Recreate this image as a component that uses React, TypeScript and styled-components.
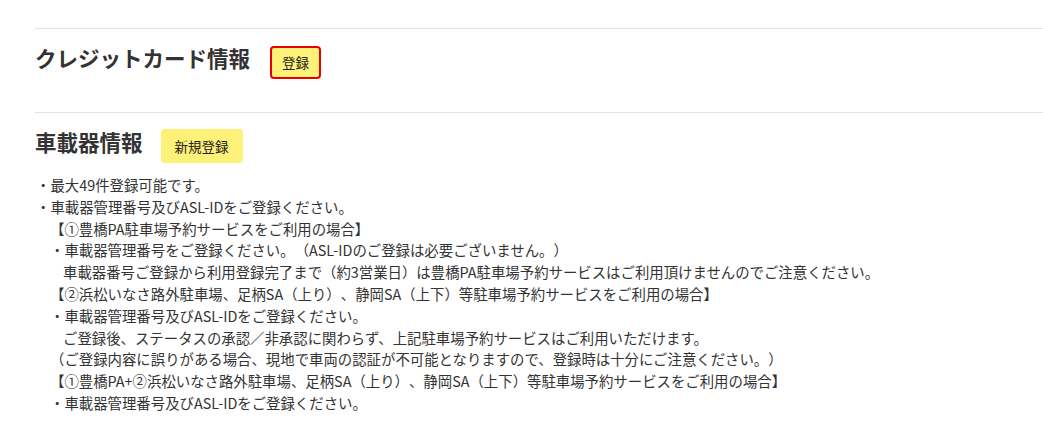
import styled, { createGlobalStyle } from 'styled-components'

const GlobalStyle = createGlobalStyle`
  body {
    margin: 0;
    background: #fff;
    font-family: 'Noto Sans CJK JP', 'Noto Sans', sans-serif;
    color: #333;
    text-spacing-trim: space-all;
  }
`

const Page = styled.div`
  padding: 28px 0 0 35px;
`

const Section = styled.section`
  border-top: 1px solid #e3e3e3;
  padding-top: 16px;
`

const HeadRow = styled.div<{ gap?: number }>`
  display: flex;
  align-items: center;
  height: 34px;
  margin-bottom: ${(p) => p.gap ?? 0}px;
`

const Title = styled.h2`
  margin: 0 0 9px;
  font-size: 21.5px;
  font-weight: 700;
  color: #333;
  line-height: 1;
`

const Button = styled.button<{ focused?: boolean }>`
  margin-left: ${(p) => (p.focused ? '20px' : '18px')};
  height: ${(p) => (p.focused ? '33px' : '34px')};
  padding: 0 ${(p) => (p.focused ? '10px' : '12px')};
  background: #fef177;
  border: ${(p) => (p.focused ? '2px solid #e60000' : '2px solid #fef177')};
  border-radius: 4px;
  font-family: inherit;
  font-size: 13.5px;
  color: #222;
  cursor: pointer;
`

const Notes = styled.div`
  margin-top: 11px;
  font-size: 14.4px;
  line-height: 21.8px;
  color: #333;
  padding-left: 1px;
`

const Line = styled.div<{ indent?: number }>`
  padding-left: ${(p) => p.indent || 0}px;
  white-space: nowrap;
`

const notes: [number, string][] = [
  [0, '・最大49件登録可能です。'],
  [0, '・車載器管理番号及びASL-IDをご登録ください。'],
  [14, '【①豊橋PA駐車場予約サービスをご利用の場合】'],
  [14, '・車載器管理番号をご登録ください。（ASL-IDのご登録は必要ございません。）'],
  [27, '車載器番号ご登録から利用登録完了まで（約3営業日）は豊橋PA駐車場予約サービスはご利用頂けませんのでご注意ください。'],
  [14, '【②浜松いなさ路外駐車場、足柄SA（上り）、静岡SA（上下）等駐車場予約サービスをご利用の場合】'],
  [14, '・車載器管理番号及びASL-IDをご登録ください。'],
  [27, 'ご登録後、ステータスの承認／非承認に関わらず、上記駐車場予約サービスはご利用いただけます。'],
  [14, '（ご登録内容に誤りがある場合、現地で車両の認証が不可能となりますので、登録時は十分にご注意ください。）'],
  [14, '【①豊橋PA+②浜松いなさ路外駐車場、足柄SA（上り）、静岡SA（上下）等駐車場予約サービスをご利用の場合】'],
  [14, '・車載器管理番号及びASL-IDをご登録ください。'],
]

export default function App() {
  return (
    <>
      <GlobalStyle />
      <Page>
        <Section>
          <HeadRow gap={33}>
            <Title>クレジットカード情報</Title>
            <Button focused>登録</Button>
          </HeadRow>
        </Section>
        <Section>
          <HeadRow>
            <Title>車載器情報</Title>
            <Button>新規登録</Button>
          </HeadRow>
          <Notes>
            {notes.map(([indent, text], i) => (
              <Line key={i} indent={indent}>
                {text}
              </Line>
            ))}
          </Notes>
        </Section>
      </Page>
    </>
  )
}
